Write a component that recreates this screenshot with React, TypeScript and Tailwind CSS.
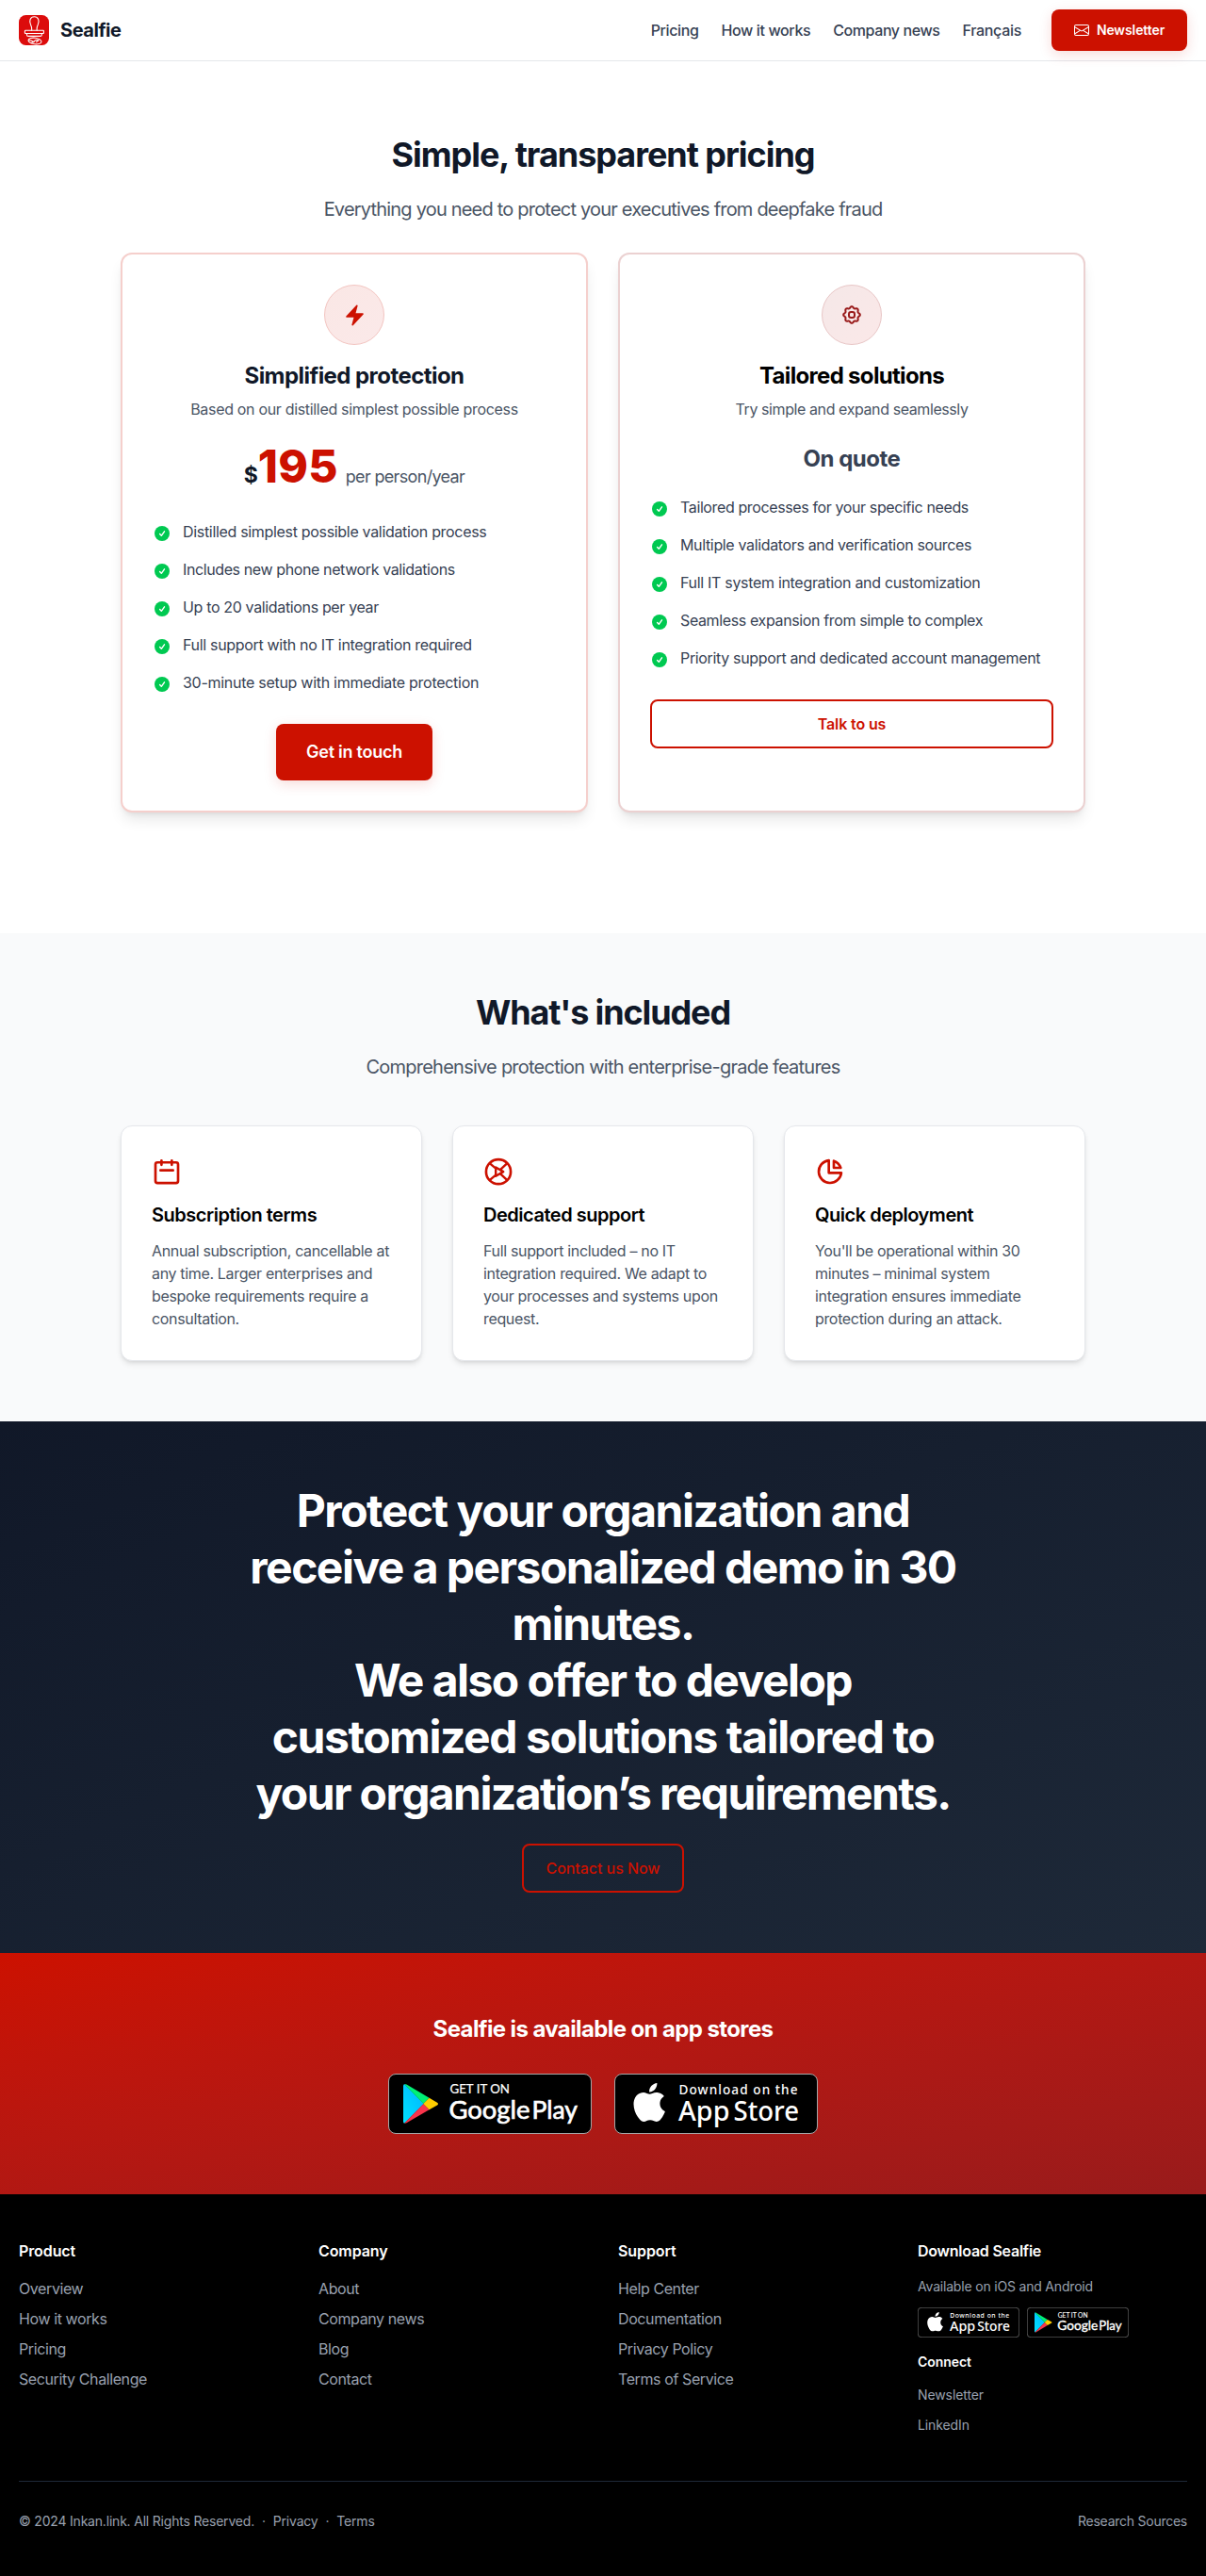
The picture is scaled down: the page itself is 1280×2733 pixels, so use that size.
import type { ReactNode } from "react";
import { BsEnvelope } from "react-icons/bs";
import { SiApple } from "react-icons/si";

function LogoMark() {
  return (
    <svg className="h-8 w-8" viewBox="0 0 32 32" fill="none" stroke="#fff" strokeWidth="1.1" strokeLinejoin="round" strokeLinecap="round">
      <rect width="32" height="32" rx="7.500" fill="#dc0c0c" stroke="none" />
      <path d="M13.700 16.200c.3-2.300-.2-4.200-1.200-6.200-1.700-3.600-.6-8.300 3.900-8.300s5.600 4.700 3.900 8.300c-1 2-1.500 3.900-1.200 6.200" />
      <rect x="6.400" y="16.300" width="20" height="3.200" rx=".6" />
      <path d="M8.500 19.600v1.300c0 .9.600 1.500 1.500 1.500h12.800c.9 0 1.500-.6 1.500-1.500v-1.300" />
      <ellipse cx="17" cy="27.500" rx="7" ry="3.300" transform="rotate(8 17 27.500)" />
      <path d="M11 26.500c2 .2 3.500 1 5 2.200M15.500 28.500c1.500-1.800 2.500-2.500 4.500-2.200M13 29.800l3.200-1.600M18.500 28.500l2.500-1.800" />
    </svg>
  );
}

function CheckIcon() {
  return (
    <svg className="mt-1 h-5 w-5 shrink-0" viewBox="0 0 20 20" fill="none">
      <circle cx="10" cy="10" r="8" className="fill-green-500" />
      <path d="M7.600 10.500l1.700 1.800 3.200-4.500" stroke="#fff" strokeWidth="1.400" strokeLinecap="round" strokeLinejoin="round" />
    </svg>
  );
}

function BoltIcon() {
  return (
    <svg className="h-[25px] w-[25px] text-[#cc1100]" viewBox="0 0 24 24" fill="currentColor">
      <path d="M14.615 1.595a.75.75 0 0 1 .359.852L12.982 9.750h7.268a.75.75 0 0 1 .548 1.262l-10.500 11.250a.75.75 0 0 1-1.272-.71l1.992-7.302H3.750a.75.75 0 0 1-.548-1.262l10.500-11.250a.75.75 0 0 1 .913-.143Z" />
    </svg>
  );
}

const gearPath =
  Array.from({ length: 96 }, (_, i) => {
    const a = (i / 96) * Math.PI * 2;
    const r = 8 + 0.85 * Math.cos(8 * a);
    return `${i ? "L" : "M"}${(12 + r * Math.cos(a)).toFixed(2)} ${(12 + r * Math.sin(a)).toFixed(2)}`;
  }).join("") + "Z";

function GearIcon() {
  return (
    <svg className="h-6 w-6 text-[#991b1b]" viewBox="0 0 24 24" fill="none" stroke="currentColor" strokeWidth="2" strokeLinejoin="round">
      <path d={gearPath} />
      <rect x="9" y="9" width="6" height="6" rx="2.300" />
    </svg>
  );
}

function OutlineIcon({ children }: { children: ReactNode }) {
  return (
    <svg className="block h-8 w-8 text-[#cc1100]" viewBox="0 0 24 24" fill="none" stroke="currentColor" strokeWidth="2" strokeLinecap="round" strokeLinejoin="round">
      {children}
    </svg>
  );
}

function GooglePlayBadge({ className }: { className: string }) {
  return (
    <svg className={className} viewBox="0 0 216 64">
      <rect x=".5" y=".5" width="215" height="63" rx="7.500" fill="#000" stroke="#a6a6a6" />
      <defs>
        <linearGradient id="playBlue" x1="1" y1="0" x2="0" y2="1">
          <stop offset="0" stopColor="#00b4ff" />
          <stop offset="1" stopColor="#00e2ff" />
        </linearGradient>
      </defs>
      <path d="M16 13.200v37.600c0 1.200.7 2 1.500 1.700L37.800 32 17.500 11.200c-.8-.2-1.500.7-1.500 2Z" fill="url(#playBlue)" />
      <path d="M17.300 11.300c.6-.3 1.300-.2 2.200.3L43.600 25.800 37.500 32Z" fill="#00f076" />
      <path d="M17.300 52.600c.6.300 1.300.2 2.200-.3L43.600 38.200 37.500 32Z" fill="#f9344c" />
      <path d="M43.600 25.800l8 4.600c1.900 1.100 1.900 2.200 0 3.300l-8 4.500L37.300 32Z" fill="#ffcd00" />
      <g fill="#fff" stroke="#fff" fontFamily="Lato, sans-serif">
        <text x="65.500" y="21" textLength="63.500" lengthAdjust="spacingAndGlyphs" fontSize="13.300" strokeWidth=".2">GET IT ON</text>
        <text x="64.500" y="48" textLength="86" lengthAdjust="spacingAndGlyphs" fontSize="27.500" strokeWidth=".7">Google</text>
        <text x="152.500" y="48" textLength="48.500" lengthAdjust="spacingAndGlyphs" fontSize="27.500" strokeWidth=".7">Play</text>
      </g>
    </svg>
  );
}

function AppStoreBadge({ className }: { className: string }) {
  return (
    <svg className={className} viewBox="0 0 216 64">
      <rect x=".5" y=".5" width="215" height="63" rx="7.500" fill="#000" stroke="#a6a6a6" />
      <SiApple size={41} x="16.700" y="10" color="#fff" />
      <g fill="#fff" fontFamily="Noto Sans, sans-serif" fontWeight="500">
        <text x="68.500" y="21.700" textLength="126" fontSize="13.600">Download on the</text>
        <text x="68" y="50.300" textLength="54.500" lengthAdjust="spacingAndGlyphs" fontSize="29.500">App</text>
        <text x="126.500" y="50.300" textLength="69.500" lengthAdjust="spacingAndGlyphs" fontSize="29.500">Store</text>
      </g>
    </svg>
  );
}

const navLinks = [
  { label: "Pricing", cls: "tracking-[-0.4px]" },
  { label: "How it works", cls: "tracking-[-0.37px]" },
  { label: "Company news", cls: "tracking-[-0.42px]" },
  { label: "Français", cls: "tracking-[-0.3px]" },
];

function Header() {
  return (
    <header className="flex h-[65px] items-center justify-between border-b border-gray-200 bg-white px-5 shadow-[0_1px_3px_rgba(0,0,0,0.06)]">
      <div className="flex items-center gap-3">
        <LogoMark />
        <span className="text-xl font-bold tracking-[-0.46px] text-gray-900">Sealfie</span>
      </div>
      <nav className="flex items-center gap-6">
        {navLinks.map((l) => (
          <a key={l.label} className={`font-medium text-gray-700 ${l.cls}`}>
            {l.label}
          </a>
        ))}
        <a className="ml-2 flex h-11 w-36 items-center justify-center gap-2 rounded-lg bg-[#cc1100] text-sm font-semibold text-white shadow-[0_4px_14px_rgba(204,17,0,0.15)]">
          <BsEnvelope className="h-4 w-4" />
          <span className="tracking-[-0.1px]">Newsletter</span>
        </a>
      </nav>
    </header>
  );
}

function Features({ items }: { items: string[][] }) {
  return (
    <ul className="flex flex-col gap-4">
      {items.map(([text, cls]) => (
        <li key={text} className="flex h-6 gap-3">
          <CheckIcon />
          <span className={`whitespace-nowrap text-gray-700 ${cls}`}>{text}</span>
        </li>
      ))}
    </ul>
  );
}

const simpleItems = [
  ["Distilled simplest possible validation process", "tracking-[-0.32px]"],
  ["Includes new phone network validations", "tracking-[-0.39px]"],
  ["Up to 20 validations per year", "tracking-[-0.35px]"],
  ["Full support with no IT integration required", "tracking-[-0.32px]"],
  ["30-minute setup with immediate protection", "tracking-[-0.28px]"],
];
const tailoredItems = [
  ["Tailored processes for your specific needs", "tracking-[-0.38px]"],
  ["Multiple validators and verification sources", "tracking-[-0.35px]"],
  ["Full IT system integration and customization", "tracking-[-0.31px]"],
  ["Seamless expansion from simple to complex", "tracking-[-0.37px]"],
  ["Priority support and dedicated account management", "tracking-[-0.34px]"],
];

function Pricing() {
  return (
    <section className="bg-white pt-[79px] pb-32">
      <h1 className="text-center text-4xl leading-10 font-bold tracking-[-1.04px] text-gray-900">Simple, transparent pricing</h1>
      <p className="mt-6 text-center text-xl leading-7 tracking-[-0.8px] text-gray-600">Everything you need to protect your executives from deepfake fraud</p>
      <div className="mx-auto mt-8 grid w-[1024px] grid-cols-2 gap-8">
        <div className="flex flex-col rounded-xl border-2 border-[#f5cfcc] bg-white p-8 shadow-lg">
          <div className="mx-auto flex h-16 w-16 items-center justify-center rounded-full border border-[#f3c5c1] bg-linear-to-br from-[#fae7e5] to-[#fbe9e9]">
            <BoltIcon />
          </div>
          <h2 className="mt-[17px] -mb-px text-center text-2xl leading-8 font-bold tracking-[-0.55px] text-gray-900">Simplified protection</h2>
          <p className="mt-2 text-center tracking-[-0.32px] text-gray-600">Based on our distilled simplest possible process</p>
          <div className="mt-[25px] flex h-12 items-baseline justify-center">
            <span className="text-[23px] font-bold text-gray-900">$</span>
            <span className="text-5xl leading-[48px] font-extrabold tracking-[0.2px] text-[#cc1100]">195</span>
            <span className="ml-2 text-lg tracking-[-0.66px] text-gray-600">per person/year</span>
          </div>
          <div className="mt-[33px]">
            <Features items={simpleItems} />
          </div>
          <a className="mx-auto mt-8 flex h-[60px] w-[166px] items-center justify-center rounded-lg bg-[#cc1100] text-lg font-semibold tracking-[-0.25px] text-white shadow-[0_4px_14px_rgba(204,17,0,0.15)]">Get in touch</a>
        </div>
        <div className="flex flex-col rounded-xl border-2 border-[#ebd1d1] bg-white p-8 shadow-lg">
          <div className="mx-auto flex h-16 w-16 items-center justify-center rounded-full border border-[#e8c6c6] bg-linear-to-br from-[#f5e8e8] to-[#fbe8e8]">
            <GearIcon />
          </div>
          <h2 className="mt-[17px] -mb-px text-center text-2xl leading-8 font-bold tracking-[-0.68px] text-black">Tailored solutions</h2>
          <p className="mt-2 text-center tracking-[-0.41px] text-gray-600">Try simple and expand seamlessly</p>
          <p className="mt-[25px] mb-[23px] text-center text-2xl leading-8 font-bold tracking-[-0.5px] text-gray-700">On quote</p>
          <Features items={tailoredItems} />
          <a className="mt-8 flex h-[52px] items-center justify-center rounded-lg border-2 border-[#cc1100] font-semibold tracking-[-0.13px] text-[#cc1100]">Talk to us</a>
        </div>
      </div>
    </section>
  );
}

const included = [
  {
    title: "Subscription terms",
    text: "Annual subscription, cancellable at any time. Larger enterprises and bespoke requirements require a consultation.",
    icon: (
      <OutlineIcon>
        <rect x="3" y="4.700" width="18" height="16.400" rx="1.600" />
        <path d="M7.800 3.200v3.400M16 3.200v3.400M7 11h10" />
      </OutlineIcon>
    ),
  },
  {
    title: "Dedicated support",
    text: "Full support included – no IT integration required. We adapt to your processes and systems upon request.",
    icon: (
      <OutlineIcon>
        <circle cx="12" cy="12.100" r="9.800" />
        <path d="M9.900 8.600v7l6-3.500ZM5.200 5.500l4.700 4M5.200 18.700l4.700-4M18.800 5.500l-4.600 4.400M18.800 18.700l-4.600-4.400" strokeWidth="1.800" />
      </OutlineIcon>
    ),
  },
  {
    title: "Quick deployment",
    text: "You'll be operational within 30 minutes – minimal system integration ensures immediate protection during an attack.",
    icon: (
      <OutlineIcon>
        <path d="M11 3.055A9.001 9.001 0 1 0 20.945 13H11V3.055z" />
        <path d="M20.488 9H15V3.512A9.025 9.025 0 0 1 20.488 9z" />
      </OutlineIcon>
    ),
  },
];

function Included() {
  return (
    <section className="bg-gray-50 py-16">
      <h2 className="text-center text-4xl leading-10 font-bold tracking-[-1.12px] text-gray-900">What's included</h2>
      <p className="mt-6 text-center text-xl leading-7 tracking-[-0.76px] text-gray-600">Comprehensive protection with enterprise-grade features</p>
      <div className="mx-auto mt-12 grid w-[1024px] grid-cols-3 gap-8">
        {included.map((c) => (
          <div key={c.title} className="rounded-xl border border-gray-200 bg-white p-8 shadow-md">
            {c.icon}
            <h3 className="mt-4 text-xl leading-7 font-semibold tracking-[-0.48px] text-black">{c.title}</h3>
            <p className="mt-3 tracking-[-0.34px] text-gray-600">{c.text}</p>
          </div>
        ))}
      </div>
    </section>
  );
}

const ctaLines = [
  { text: "Protect your organization and", cls: "tracking-[-1.48px]" },
  { text: "receive a personalized demo in 30", cls: "tracking-[-1.54px]" },
  { text: "minutes.", cls: "tracking-[-1.54px]" },
  { text: "We also offer to develop", cls: "tracking-[-1.55px]" },
  { text: "customized solutions tailored to", cls: "tracking-[-1.45px]" },
  { text: "your organization’s requirements.", cls: "tracking-[-1.62px]" },
];

function CallToAction() {
  return (
    <section className="flex flex-col items-center bg-linear-to-br from-gray-900 to-gray-800 pt-[65px] pb-16">
      <h2 className="text-center text-5xl leading-[60px] font-bold text-white">
        {ctaLines.map((l) => (
          <span key={l.text} className={`block ${l.cls}`}>
            {l.text}
          </span>
        ))}
      </h2>
      <a className="mt-[23px] flex h-[52px] w-[172px] items-center justify-center rounded-lg border-2 border-[#cc1100] font-medium tracking-[-0.06px] text-[#cc1100]">Contact us Now</a>
    </section>
  );
}

function Stores() {
  return (
    <section className="bg-linear-to-br from-[#cc1100] to-[#991b1b] pt-[65px] pb-16">
      <h2 className="text-center text-2xl leading-8 font-bold tracking-[-0.61px] text-white">Sealfie is available on app stores</h2>
      <div className="mt-[31px] flex justify-center gap-6">
        <GooglePlayBadge className="h-16 w-[216px]" />
        <AppStoreBadge className="h-16 w-[216px]" />
      </div>
    </section>
  );
}

const footerColumns = [
  { title: "Product", links: ["Overview", "How it works", "Pricing", "Security Challenge"] },
  { title: "Company", links: ["About", "Company news", "Blog", "Contact"] },
  { title: "Support", links: ["Help Center", "Documentation", "Privacy Policy", "Terms of Service"] },
];

function Footer() {
  return (
    <footer className="bg-black px-5 py-12">
      <div className="grid grid-cols-4 gap-8">
        {footerColumns.map((c) => (
          <div key={c.title}>
            <h3 className="font-semibold tracking-[-0.1px] text-white">{c.title}</h3>
            <ul className="mt-4 flex flex-col gap-2 tracking-[-0.4px] text-gray-400">
              {c.links.map((l) => (
                <li key={l}>{l}</li>
              ))}
            </ul>
          </div>
        ))}
        <div>
          <h3 className="font-semibold tracking-[-0.24px] text-white">Download Sealfie</h3>
          <p className="mt-4 text-sm tracking-[-0.19px] text-gray-400">Available on iOS and Android</p>
          <div className="mt-3 flex gap-2">
            <AppStoreBadge className="h-8 w-[108px]" />
            <GooglePlayBadge className="h-8 w-[108px]" />
          </div>
          <h4 className="mt-4 text-sm font-semibold tracking-[-0.05px] text-white">Connect</h4>
          <ul className="mt-3 flex flex-col gap-2 text-gray-400">
            <li>
              <a className="text-sm tracking-[-0.1px]">Newsletter</a>
            </li>
            <li>
              <a className="text-sm tracking-[-0.1px]">LinkedIn</a>
            </li>
          </ul>
        </div>
      </div>
      <div className="mt-12 flex justify-between border-t border-gray-800 pt-8 text-sm tracking-[-0.2px] text-gray-400">
        <div className="flex gap-2">
          <span>© 2024 Inkan.link. All Rights Reserved.</span>
          <span>·</span>
          <a>Privacy</a>
          <span>·</span>
          <a>Terms</a>
        </div>
        <a className="tracking-[-0.25px]">Research Sources</a>
      </div>
    </footer>
  );
}

export default function App() {
  return (
    <div className="w-full bg-white font-['Inter',sans-serif] text-base antialiased">
      <Header />
      <Pricing />
      <Included />
      <CallToAction />
      <Stores />
      <Footer />
    </div>
  );
}
